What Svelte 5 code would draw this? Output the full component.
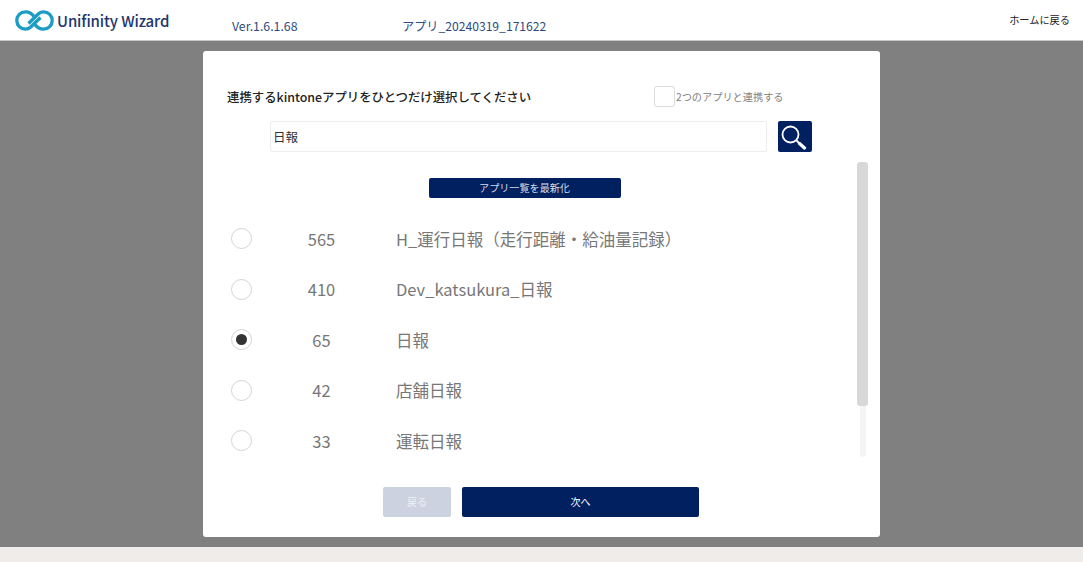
<script>
  const apps = [
    { id: 565, name: 'H_運行日報（走行距離・給油量記録）' },
    { id: 410, name: 'Dev_katsukura_日報' },
    { id: 65, name: '日報', checked: true },
    { id: 42, name: '店舗日報' },
    { id: 33, name: '運転日報' }
  ];
</script>

<div class="page">
  <header class="top">
    <div class="brand">
      <svg class="logo" width="39" height="21" viewBox="0 0 39 21" fill="none" stroke="#1a9cc4" stroke-width="3.3">
        <path d="M19 6.5 C16.5 3 14 1.8 10.5 1.8 C5.5 1.8 1.8 5.6 1.8 10.5 C1.8 15.4 5.5 19.2 10.5 19.2 C12.5 19.2 14 18.6 15.5 17.3 L25.5 7.5" />
        <path d="M20 14.5 C22.5 18 25 19.2 28.5 19.2 C33.5 19.2 37.2 15.4 37.2 10.5 C37.2 5.6 33.5 1.8 28.5 1.8 C26.5 1.8 25 2.4 23.5 3.7 L13.5 13.5" />
      </svg>
      <span class="brand-name">Unifinity Wizard</span>
    </div>
    <span class="version">Ver.1.6.1.68</span>
    <span class="appname">アプリ_20240319_171622</span>
    <span class="home">ホームに戻る</span>
  </header>

  <main class="backdrop">
    <section class="modal">
      <div class="title-row">
        <h1>連携するkintoneアプリをひとつだけ選択してください</h1>
        <label class="two">
          <span class="check"></span>
          <span>2つのアプリと連携する</span>
        </label>
      </div>

      <div class="search-row">
        <div class="search-input">日報</div>
        <button class="search-btn" aria-label="検索">
          <svg width="28" height="26" viewBox="0 0 28 26" fill="none" stroke="#fff">
            <circle cx="9.5" cy="10.5" r="8" stroke-width="1.8" />
            <path d="M15.5 16.5 L18 19" stroke-width="1.8" />
            <path d="M18.5 19.5 L23.5 24" stroke-width="3.2" stroke-linecap="round" />
          </svg>
        </button>
      </div>

      <div class="list-wrap">
        <div class="list">
          <div class="refresh-row"><button class="refresh">アプリ一覧を最新化</button></div>
          {#each apps as app}
            <div class="item">
              <span class="radio" class:on={app.checked}></span>
              <span class="num">{app.id}</span>
              <span class="name">{app.name}</span>
            </div>
          {/each}
        </div>
        <div class="track"><div class="thumb"></div></div>
      </div>

      <div class="actions">
        <button class="back">戻る</button>
        <button class="next">次へ</button>
      </div>
    </section>
  </main>
  <footer class="foot"></footer>
</div>

<style>
  :global(body) {
    margin: 0;
    background: #fff;
    font-family: "Noto Sans CJK JP", "Noto Sans", sans-serif;
  }
  button {
    font-family: inherit;
    border: 0;
    padding: 0;
  }
  .page {
    height: 562px;
    overflow: hidden;
    display: flex;
    flex-direction: column;
  }
  .top {
    height: 40px;
    flex: none;
    display: flex;
    align-items: center;
    border-bottom: 1px solid #c9c9c9;
    box-sizing: content-box;
    background: #fff;
  }
  .brand {
    display: flex;
    align-items: center;
    gap: 3px;
    margin-left: 15px;
    width: 217px;
    margin-top: 1px;
  }
  .brand-name {
    font-size: 15px;
    font-weight: 500;
    color: #23366f;
    letter-spacing: -0.12px;
  }
  .version {
    width: 170px;
    font-size: 12.3px;
    color: #2e4a80;
    line-height: 16px;
    margin-top: 12px;
  }
  .appname {
    font-size: 12.15px;
    color: #2e4a80;
    line-height: 16px;
    margin-top: 12px;
  }
  .home {
    margin-left: auto;
    margin-right: 13px;
    font-size: 10.2px;
    color: #222;
    line-height: 14px;
  }
  .backdrop {
    height: 506px;
    flex: none;
    background: #808080;
    padding: 10px 203px 0;
    box-sizing: border-box;
  }
  .modal {
    height: 486px;
    background: #fff;
    border-radius: 3px;
    box-sizing: border-box;
    padding-top: 35px;
  }
  .title-row {
    display: flex;
    align-items: center;
    height: 21px;
    padding-left: 24px;
  }
  h1 {
    margin: 0;
    width: 427px;
    font-size: 12.4px;
    font-weight: 500;
    color: #222;
  }
  .two {
    display: flex;
    align-items: center;
    gap: 1px;
    font-size: 10.2px;
    color: #808080;
  }
  .check {
    flex: none;
    width: 21px;
    height: 21px;
    box-sizing: border-box;
    border: 1.5px solid #dcdcdc;
    border-radius: 3px;
  }
  .search-row {
    display: flex;
    margin: 14px 0 0 67px;
    gap: 11px;
  }
  .search-input {
    width: 497px;
    height: 31px;
    box-sizing: border-box;
    border: 1px solid #ececec;
    border-radius: 2px;
    padding-left: 2px;
    font-size: 12.5px;
    line-height: 29px;
    color: #333;
  }
  .search-btn {
    width: 34px;
    height: 31px;
    background: #002060;
    border-radius: 2px;
    display: flex;
    align-items: center;
    justify-content: center;
  }
  .list-wrap {
    display: flex;
    margin-top: 10px;
    height: 295px;
  }
  .list {
    width: 653px;
  }
  .refresh-row {
    display: flex;
    justify-content: center;
    padding: 16px 10px 0 0;
    height: 20px;
    margin-bottom: 15.4px;
  }
  .refresh {
    width: 192px;
    height: 20px;
    padding-bottom: 2px;
    background: #002060;
    color: #d5dbe8;
    font-size: 10.1px;
    border-radius: 2px;
  }
  .item {
    height: 50.5px;
    display: flex;
    align-items: center;
    padding-left: 28px;
    color: #777;
    font-size: 16.5px;
  }
  .radio {
    width: 21px;
    height: 21px;
    box-sizing: border-box;
    border: 1.5px solid #d4d4d4;
    border-radius: 50%;
    display: flex;
    align-items: center;
    justify-content: center;
    flex: none;
  }
  .radio.on::after {
    content: "";
    width: 11px;
    height: 11px;
    border-radius: 50%;
    background: #333;
  }
  .num {
    width: 80px;
    margin-left: 29.5px;
    text-align: center;
    flex: none;
  }
  .name {
    margin-left: 34.5px;
  }
  .track {
    width: 6px;
    margin-left: 4px;
    background: #f4f4f4;
    border-radius: 3px;
  }
  .thumb {
    width: 11px;
    margin-left: -3px;
    height: 244px;
    background: #d8d8d8;
    border-radius: 3px;
  }
  .actions {
    display: flex;
    margin: 30px 0 0 180px;
    gap: 11px;
  }
  .actions button {
    height: 30px;
    padding-bottom: 2px;
    color: #fff;
    font-size: 10px;
    border-radius: 2px;
  }
  .back {
    width: 68px;
    background: #ccd2e0;
    color: #eef0f5 !important;
  }
  .next {
    width: 237px;
    background: #002060;
  }
  .foot {
    flex: none;
    height: 15px;
    background: #f0ecea;
  }
</style>
